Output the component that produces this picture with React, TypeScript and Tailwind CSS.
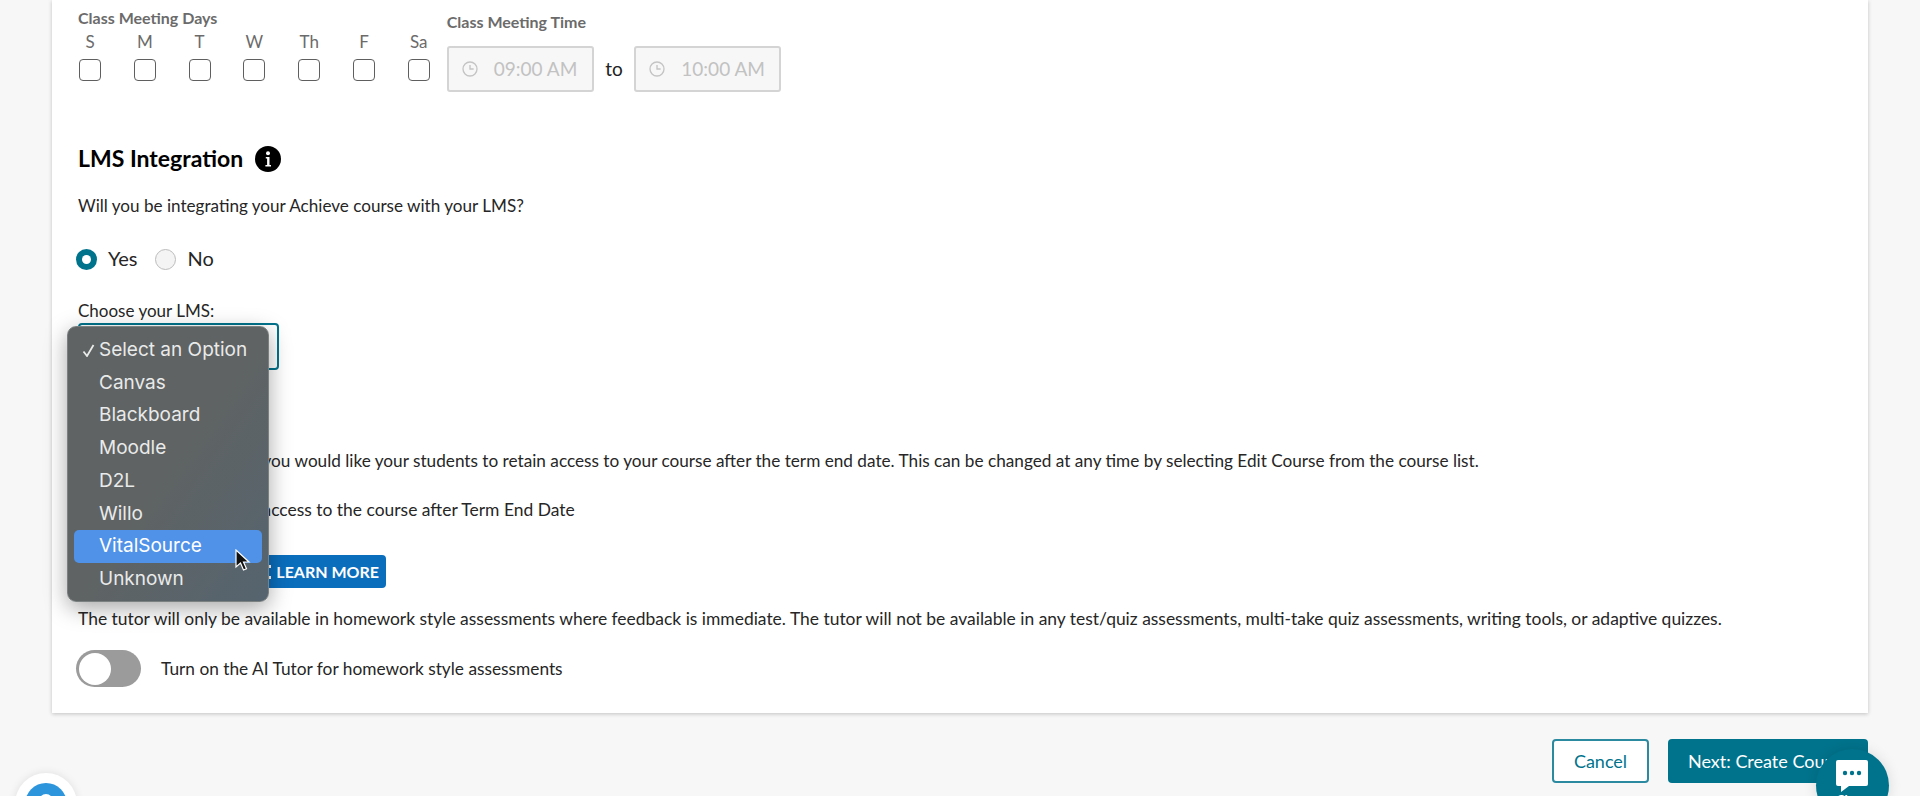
const sans = "font-['Lato','Noto_Sans',sans-serif]";

function Clock() {
  return (
    <svg width="16" height="16" viewBox="0 0 24 24" fill="none" stroke="#c4c4c4" strokeWidth="2">
      <circle cx="12" cy="12" r="10.5" />
      <path d="M12 6v6h5.5" />
    </svg>
  );
}

function TimeBox({ value }: { value: string }) {
  return (
    <div className="flex h-[46px] w-[147px] items-center rounded-[3px] border-2 border-[#d4d4d4] bg-[#f7f7f7] pl-[13px]">
      <Clock />
      <span className="ml-[16px] text-[19px] whitespace-pre text-[#c2c2c2]">{value}</span>
    </div>
  );
}

const days = ["S", "M", "T", "W", "Th", "F", "Sa"];
const options = ["Select an Option", "Canvas", "Blackboard", "Moodle", "D2L", "Willo", "VitalSource", "Unknown"];

export default function App() {
  return (
    <div className={`relative h-[796px] w-full overflow-hidden bg-[#f7f7f7] text-[17.45px] text-[#262626] ${sans}`}>
      <div className="ml-[52px] h-[713px] w-[1816px] bg-white px-[26px] shadow-[0_1px_4px_rgba(0,0,0,0.22)]">
        <div className="flex h-[92px] items-start">
          <div className="pt-[8px]">
            <div className="h-[20px] text-[16px] leading-[20px] font-bold text-[#6b6b6b]">Class Meeting Days</div>
            <div className="mt-[4px] flex gap-[32.8px] pl-px">
              {days.map((d) => (
                <div key={d} className="flex w-[22px] flex-col items-center">
                  <span className="h-[20px] text-[17px] leading-[20px] text-[#6b6b6b]">{d}</span>
                  <span className="mt-[7px] h-[22px] w-[22px] rounded-[4px] border border-[#5f5f5f] bg-white" />
                </div>
              ))}
            </div>
          </div>
          <div className="ml-[17px] pt-[12px]">
            <div className="h-[20px] text-[16px] leading-[20px] font-bold text-[#6b6b6b]">Class Meeting Time</div>
            <div className="mt-[14px] flex items-center">
              <TimeBox value="09:00 AM" />
              <span className="mx-[11.5px] text-[19px] text-[#222]">to</span>
              <TimeBox value="10:00 AM" />
            </div>
          </div>
        </div>

        <div className="mt-[54px] flex h-[26px] items-center">
          <h2 className="-mt-[2px] text-[23px] font-bold text-black">LMS Integration</h2>
          <span className="ml-[12px] flex h-[26px] w-[26px] items-center justify-center rounded-full bg-black">
            <svg width="6" height="16" viewBox="0 0 6 16" fill="white">
              <circle cx="3" cy="2.2" r="2" />
              <path d="M0.8 6h3.7v8H6v1.6H0.4V14h1.7V7.6H0.8z" />
            </svg>
          </span>
        </div>
        <p className="mt-[22px] h-[24px] text-[17.1px] leading-[24px]">Will you be integrating your Achieve course with your LMS?</p>

        <div className="mt-[31px] flex h-[20px] items-center text-[20px]">
          <span className="-ml-[2px] flex h-[21px] w-[21px] items-center justify-center rounded-full bg-[#00738c]">
            <span className="h-[9px] w-[9px] rounded-full bg-white" />
          </span>
          <span className="-mt-[2px] ml-[11px]">Yes</span>
          <span className="ml-[17px] h-[21px] w-[21px] rounded-full border border-[#bcbcbc] bg-[#f4f4f4]" />
          <span className="-mt-[2px] ml-[12px]">No</span>
        </div>

        <div className="mt-[32px] h-[20px] text-[17px] leading-[20px]">Choose your LMS:</div>
        <div className="mt-[2px] h-[47px] w-[201px] rounded-[4px] border-2 border-[#00738c] bg-white" />

        <h2 className="mt-[28px] h-[26px] text-[23px] leading-[26px] font-bold text-black">Access</h2>
        <p className="mt-[25px] h-[24px] pl-[1.5px] text-[17.2px] leading-[24px]">Please indicate whether you would like your students to retain access to your course after the term end date. This can be changed at any time by selecting Edit Course from the course list.</p>
        <div className="mt-[25px] flex h-[24px] items-center leading-[24px]">
          <span className="mr-[12px] h-[22px] w-[22px] rounded-[4px] border border-[#5f5f5f]" />
          <span>Students will retain access to the course after Term End Date</span>
        </div>

        <div className="mt-[34px] flex h-[33px] items-center">
          <h2 className="text-[23px] font-bold text-black">AI Tutor</h2>
        </div>
        <p className="mt-[18px] h-[24px] leading-[24px]">The tutor will only be available in homework style assessments where feedback is immediate. The tutor will not be available in any test/quiz assessments, multi-take quiz assessments, writing tools, or adaptive quizzes.</p>
        <div className="mt-[19px] flex h-[37px] items-center">
          <span className="-ml-[2px] flex h-[37px] w-[65px] items-center rounded-full bg-[#9b9b9b] pl-[3px]">
            <span className="h-[32px] w-[32px] rounded-full bg-white" />
          </span>
          <span className="ml-[20px] text-[17.3px]">Turn on the AI Tutor for homework style assessments</span>
        </div>
      </div>

      <div className="mt-[26px] ml-[1552px] flex gap-[19px] text-[18px]">
        <button className="h-[44px] w-[97px] rounded-[4px] border-2 border-[#2c8aa0] bg-white text-[#00738c]">Cancel</button>
        <button className="h-[44px] w-[200px] rounded-[4px] bg-[#00738c] pl-[20px] text-left whitespace-nowrap text-white">Next: Create Course</button>
      </div>

      {/* LEARN MORE button, under the open menu */}
      <div className="absolute top-[555px] left-[240px] flex h-[33px] w-[146px] items-center justify-end rounded-[4px] bg-[#0a6ebd] pr-[7px] text-[16px] font-bold whitespace-nowrap text-white">
        <span className="mr-[5px] h-[14px] w-[2px] border-y-[3px] border-white bg-transparent" />
        LEARN MORE
      </div>

      {/* Native select menu */}
      <div className="absolute top-[326px] left-[67px] h-[276px] w-[202px] rounded-[9px] border border-[#7b8081] bg-gradient-to-br from-[#5f6363] via-[#5f6363] to-[#55646f] px-[6px] pt-[7px] font-['Inter',sans-serif] text-[19px] text-[#e9eaea] shadow-[0_6px_22px_rgba(0,0,0,0.35)]">
        {options.map((o, i) => (
          <div key={o} className={`relative flex h-[32.7px] items-center rounded-[5px] pl-[25px] whitespace-nowrap ${o === "VitalSource" ? "bg-[#5092e8] text-white" : ""}`}>
            {i === 0 && (
              <svg className="absolute left-[8px]" width="13" height="13" viewBox="0 0 13 13" fill="none" stroke="#e9eaea" strokeWidth="1.8">
                <path d="M1.5 7.5 5 12 11.5 1" />
              </svg>
            )}
            {o}
          </div>
        ))}
      </div>

      {/* Mouse cursor */}
      <svg className="absolute top-[549px] left-[235px]" width="16" height="24" viewBox="0 0 16 24">
        <path d="M1 1v17l4.5-4 3 7 3-1.3-3-6.7H14z" fill="#111" stroke="#fff" strokeWidth="1.2" />
      </svg>

      {/* Chat launcher */}
      <div className="absolute top-[749px] left-[1816px] h-[73px] w-[73px] rounded-full bg-[#00738c] shadow-[0_0_14px_rgba(0,0,0,0.12)]" />
      <svg className="absolute top-[760px] left-[1836px]" width="32" height="32" viewBox="0 0 32 32">
        <path d="M2 0h28a2 2 0 0 1 2 2v22a2 2 0 0 1-2 2H13l-8 6v-6H2a2 2 0 0 1-2-2V2a2 2 0 0 1 2-2z" fill="#fff" />
        <circle cx="9" cy="13" r="2.2" fill="#00738c" />
        <circle cx="16" cy="13" r="2.2" fill="#00738c" />
        <circle cx="23" cy="13" r="2.2" fill="#00738c" />
      </svg>
      <span className="absolute top-[792px] left-[1836px] text-[13px] leading-[16px] font-bold text-white">Chat</span>

      {/* Help launcher, cut off by the page bottom */}
      <div className="absolute top-[773px] left-[15px] flex h-[62px] w-[62px] items-center justify-center rounded-full bg-white shadow-[0_0_8px_rgba(0,0,0,0.1)]">
        <div className="flex h-[42px] w-[42px] justify-center rounded-full bg-[#2d95dc] pt-[11px]">
          <span className="h-[14px] w-[14px] rounded-full bg-white" />
        </div>
      </div>
    </div>
  );
}
